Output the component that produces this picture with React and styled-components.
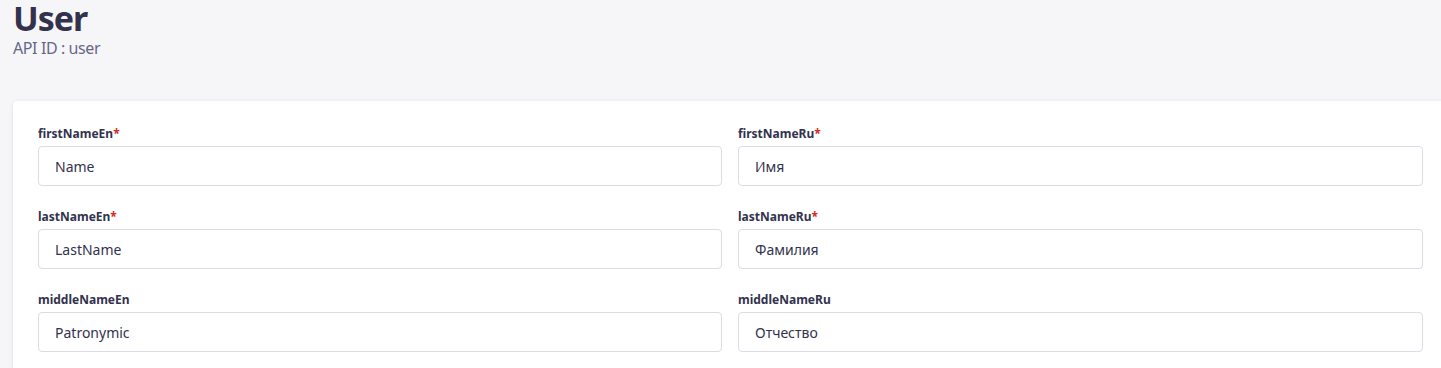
import React from "react";
import styled, { createGlobalStyle } from "styled-components";

const GlobalStyle = createGlobalStyle`
  html, body {
    margin: 0;
    padding: 0;
    background: #f6f6f9;
    font-family: "Noto Sans", "Open Sans", sans-serif;
    overflow: hidden;
  }
`;

const fields = [
  { name: "firstNameEn", value: "Name", required: true },
  { name: "firstNameRu", value: "Имя", required: true },
  { name: "lastNameEn", value: "LastName", required: true },
  { name: "lastNameRu", value: "Фамилия", required: true },
  { name: "middleNameEn", value: "Patronymic" },
  { name: "middleNameRu", value: "Отчество" },
];

const Page = styled.div`
  padding: 0 0 0 13px;
  width: 1460px;
`;

const Header = styled.header`
  height: 101px;
`;

const Title = styled.h1`
  margin: 0;
  font-size: 34px;
  line-height: 36px;
  font-weight: 700;
  letter-spacing: -1px;
  color: #32324d;
`;

const Subtitle = styled.p`
  margin: 2px 0 0;
  font-size: 16px;
  line-height: 20px;
  letter-spacing: -0.4px;
  color: #666687;
`;

const Card = styled.section`
  background: #fff;
  border-radius: 4px;
  box-shadow: 0 1px 4px rgba(33, 33, 52, 0.1);
  padding: 25px 24px 24px 25px;
  width: 1385px;
`;

const Grid = styled.div`
  display: grid;
  grid-template-columns: 684px 685px;
  column-gap: 16px;
  row-gap: 23px;
`;

const Field = styled.div`
  display: flex;
  flex-direction: column;
  gap: 4px;
`;

const Label = styled.label`
  font-size: 12px;
  line-height: 16px;
  font-weight: 700;
  color: #32324d;
`;

const Star = styled.span`
  color: #d02b20;
`;

const Input = styled.div`
  box-sizing: border-box;
  height: 40px;
  border: 1px solid #dcdce4;
  border-radius: 4px;
  padding: 0 16px;
  display: flex;
  align-items: center;
  font-size: 14px;
  color: #32324d;
`;

export default function App() {
  return (
    <>
      <GlobalStyle />
      <Page>
        <Header>
          <Title>User</Title>
          <Subtitle>API ID : user</Subtitle>
        </Header>
        <Card>
          <Grid>
            {fields.map((f) => (
              <Field key={f.name}>
                <Label>
                  {f.name}
                  {f.required && <Star>*</Star>}
                </Label>
                <Input>{f.value}</Input>
              </Field>
            ))}
          </Grid>
        </Card>
      </Page>
    </>
  );
}
